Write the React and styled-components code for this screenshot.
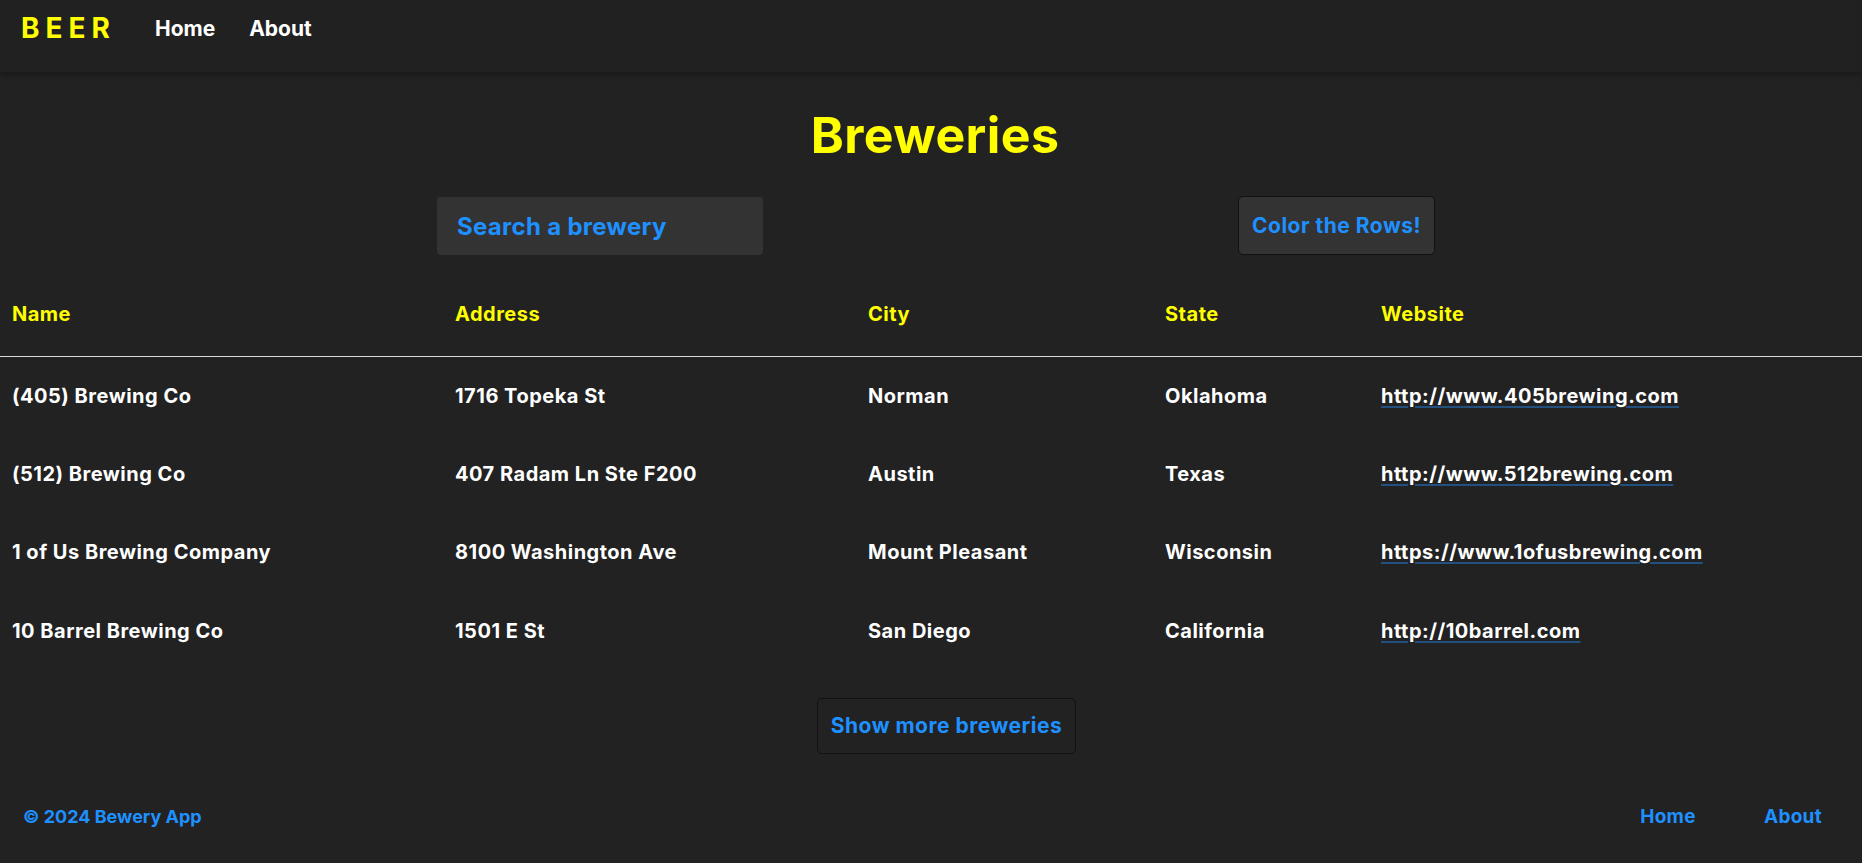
import React from "react";
import styled, { createGlobalStyle } from "styled-components";

const GlobalStyle = createGlobalStyle`
  html, body {
    margin: 0;
    padding: 0;
    background: #222222;
    font-family: "Inter", "Noto Sans", sans-serif;
    color: #ffffff;
  }
  * { box-sizing: border-box; }
`;

const Page = styled.div`
  min-height: 863px;
  background: #222222;
  display: flex;
  flex-direction: column;
`;

const Header = styled.header`
  height: 72px;
  padding: 14px 20px 0 21px;
  display: flex;
  align-items: flex-start;
  gap: 34px;
  background: #212121;
  box-shadow: 0 2px 6px rgba(0, 0, 0, 0.35);
  position: relative;
  z-index: 1;
`;

const Logo = styled.div`
  height: 28px;
  margin-right: 5px;
  display: flex;
  align-items: center;
  font-size: 28px;
  line-height: 1;
  font-weight: 700;
  letter-spacing: 6px;
  color: #ffff00;
`;

const NavLink = styled.a`
  height: 28px;
  display: flex;
  align-items: center;
  font-size: ${(p) => p.$fs || 21}px;
  letter-spacing: ${(p) => p.$ls || 0}px;
  line-height: 1;
  font-weight: 700;
  color: ${(p) => p.$color || "#ffffff"};
  text-decoration: none;
`;

const Main = styled.main`
  display: flex;
  flex-direction: column;
`;

const Title = styled.h1`
  margin: 38px 0 0;
  padding-left: 8px;
  text-align: center;
  font-size: 50px;
  letter-spacing: 0.4px;
  line-height: 1;
  font-weight: 700;
  color: #ffff00;
`;

const Controls = styled.div`
  margin-top: 36px;
  padding-left: 437px;
  display: flex;
  align-items: flex-start;
  gap: 475px;
`;

const SearchBox = styled.input`
  width: 326px;
  height: 58px;
  margin-top: 1px;
  padding: 0 0 0 20px;
  border: none;
  border-radius: 4px;
  background: #333333;
  font-family: "Inter", sans-serif;
  font-size: 24px;
  letter-spacing: 0.3px;
  font-weight: 700;
  color: #ffffff;
  outline: none;
  &::placeholder {
    color: #1e90ff;
    opacity: 1;
  }
`;

const Button = styled.button`
  height: ${(p) => p.$h || 59}px;
  padding: 0 ${(p) => p.$px || 13}px;
  border: 1px solid #111111;
  border-radius: 5px;
  background: ${(p) => p.$bg || "#333333"};
  font-family: "Inter", sans-serif;
  font-size: ${(p) => p.$fs || 21}px;
  letter-spacing: 0.5px;
  line-height: 1;
  font-weight: 700;
  color: #1e90ff;
  cursor: pointer;
`;

const Table = styled.div`
  margin-top: 17px;
  display: grid;
  grid-template-columns: 443px 413px 297px 216px 1fr;
`;

const HeadCell = styled.div`
  height: 85px;
  padding-left: 12px;
  display: flex;
  align-items: center;
  border-bottom: 1px solid #d9d9d9;
  font-size: 20px;
  letter-spacing: 0.5px;
  line-height: 1;
  font-weight: 700;
  color: #ffff00;
`;

const Cell = styled.div`
  height: 78.2px;
  padding-left: 12px;
  display: flex;
  align-items: center;
  font-size: 20px;
  letter-spacing: 0.5px;
  line-height: 1;
  font-weight: 700;
  color: #ffffff;
`;

const Link = styled.a`
  color: #ffffff;
  text-decoration: underline;
  text-decoration-color: #22507f;
  text-decoration-thickness: 2px;
  text-underline-offset: 3px;
`;

const MoreWrap = styled.div`
  margin-top: 28px;
  padding-left: 31px;
  display: flex;
  justify-content: center;
`;

const Footer = styled.footer`
  margin-top: 49px;
  padding: 0 40px 0 23px;
  display: flex;
  align-items: center;
  justify-content: space-between;
`;

const Copy = styled.div`
  font-size: 18px;
  line-height: 1;
  font-weight: 700;
  color: #1e90ff;
`;

const FooterNav = styled.nav`
  display: flex;
  gap: 68px;
`;

const breweries = [
  ["(405) Brewing Co", "1716 Topeka St", "Norman", "Oklahoma", "http://www.405brewing.com"],
  ["(512) Brewing Co", "407 Radam Ln Ste F200", "Austin", "Texas", "http://www.512brewing.com"],
  ["1 of Us Brewing Company", "8100 Washington Ave", "Mount Pleasant", "Wisconsin", "https://www.1ofusbrewing.com"],
  ["10 Barrel Brewing Co", "1501 E St", "San Diego", "California", "http://10barrel.com"],
];

export default function App() {
  return (
    <Page>
      <GlobalStyle />
      <Header>
        <Logo>BEER</Logo>
        <NavLink href="#">Home</NavLink>
        <NavLink href="#">About</NavLink>
      </Header>
      <Main>
        <Title>Breweries</Title>
        <Controls>
          <SearchBox placeholder="Search a brewery" />
          <Button>Color the Rows!</Button>
        </Controls>
        <Table>
          {["Name", "Address", "City", "State", "Website"].map((h) => (
            <HeadCell key={h}>{h}</HeadCell>
          ))}
          {breweries.map((b) => (
            <React.Fragment key={b[0]}>
              <Cell>{b[0]}</Cell>
              <Cell>{b[1]}</Cell>
              <Cell>{b[2]}</Cell>
              <Cell>{b[3]}</Cell>
              <Cell>
                <Link href="#">{b[4]}</Link>
              </Cell>
            </React.Fragment>
          ))}
        </Table>
        <MoreWrap>
          <Button $bg="#222222" $h={56} $px={13}>Show more breweries</Button>
        </MoreWrap>
      </Main>
      <Footer>
        <Copy>© 2024 Bewery App</Copy>
        <FooterNav>
          <NavLink href="#" $color="#1e90ff" $fs={19} $ls={0.3}>Home</NavLink>
          <NavLink href="#" $color="#1e90ff" $fs={19} $ls={0.3}>About</NavLink>
        </FooterNav>
      </Footer>
    </Page>
  );
}
